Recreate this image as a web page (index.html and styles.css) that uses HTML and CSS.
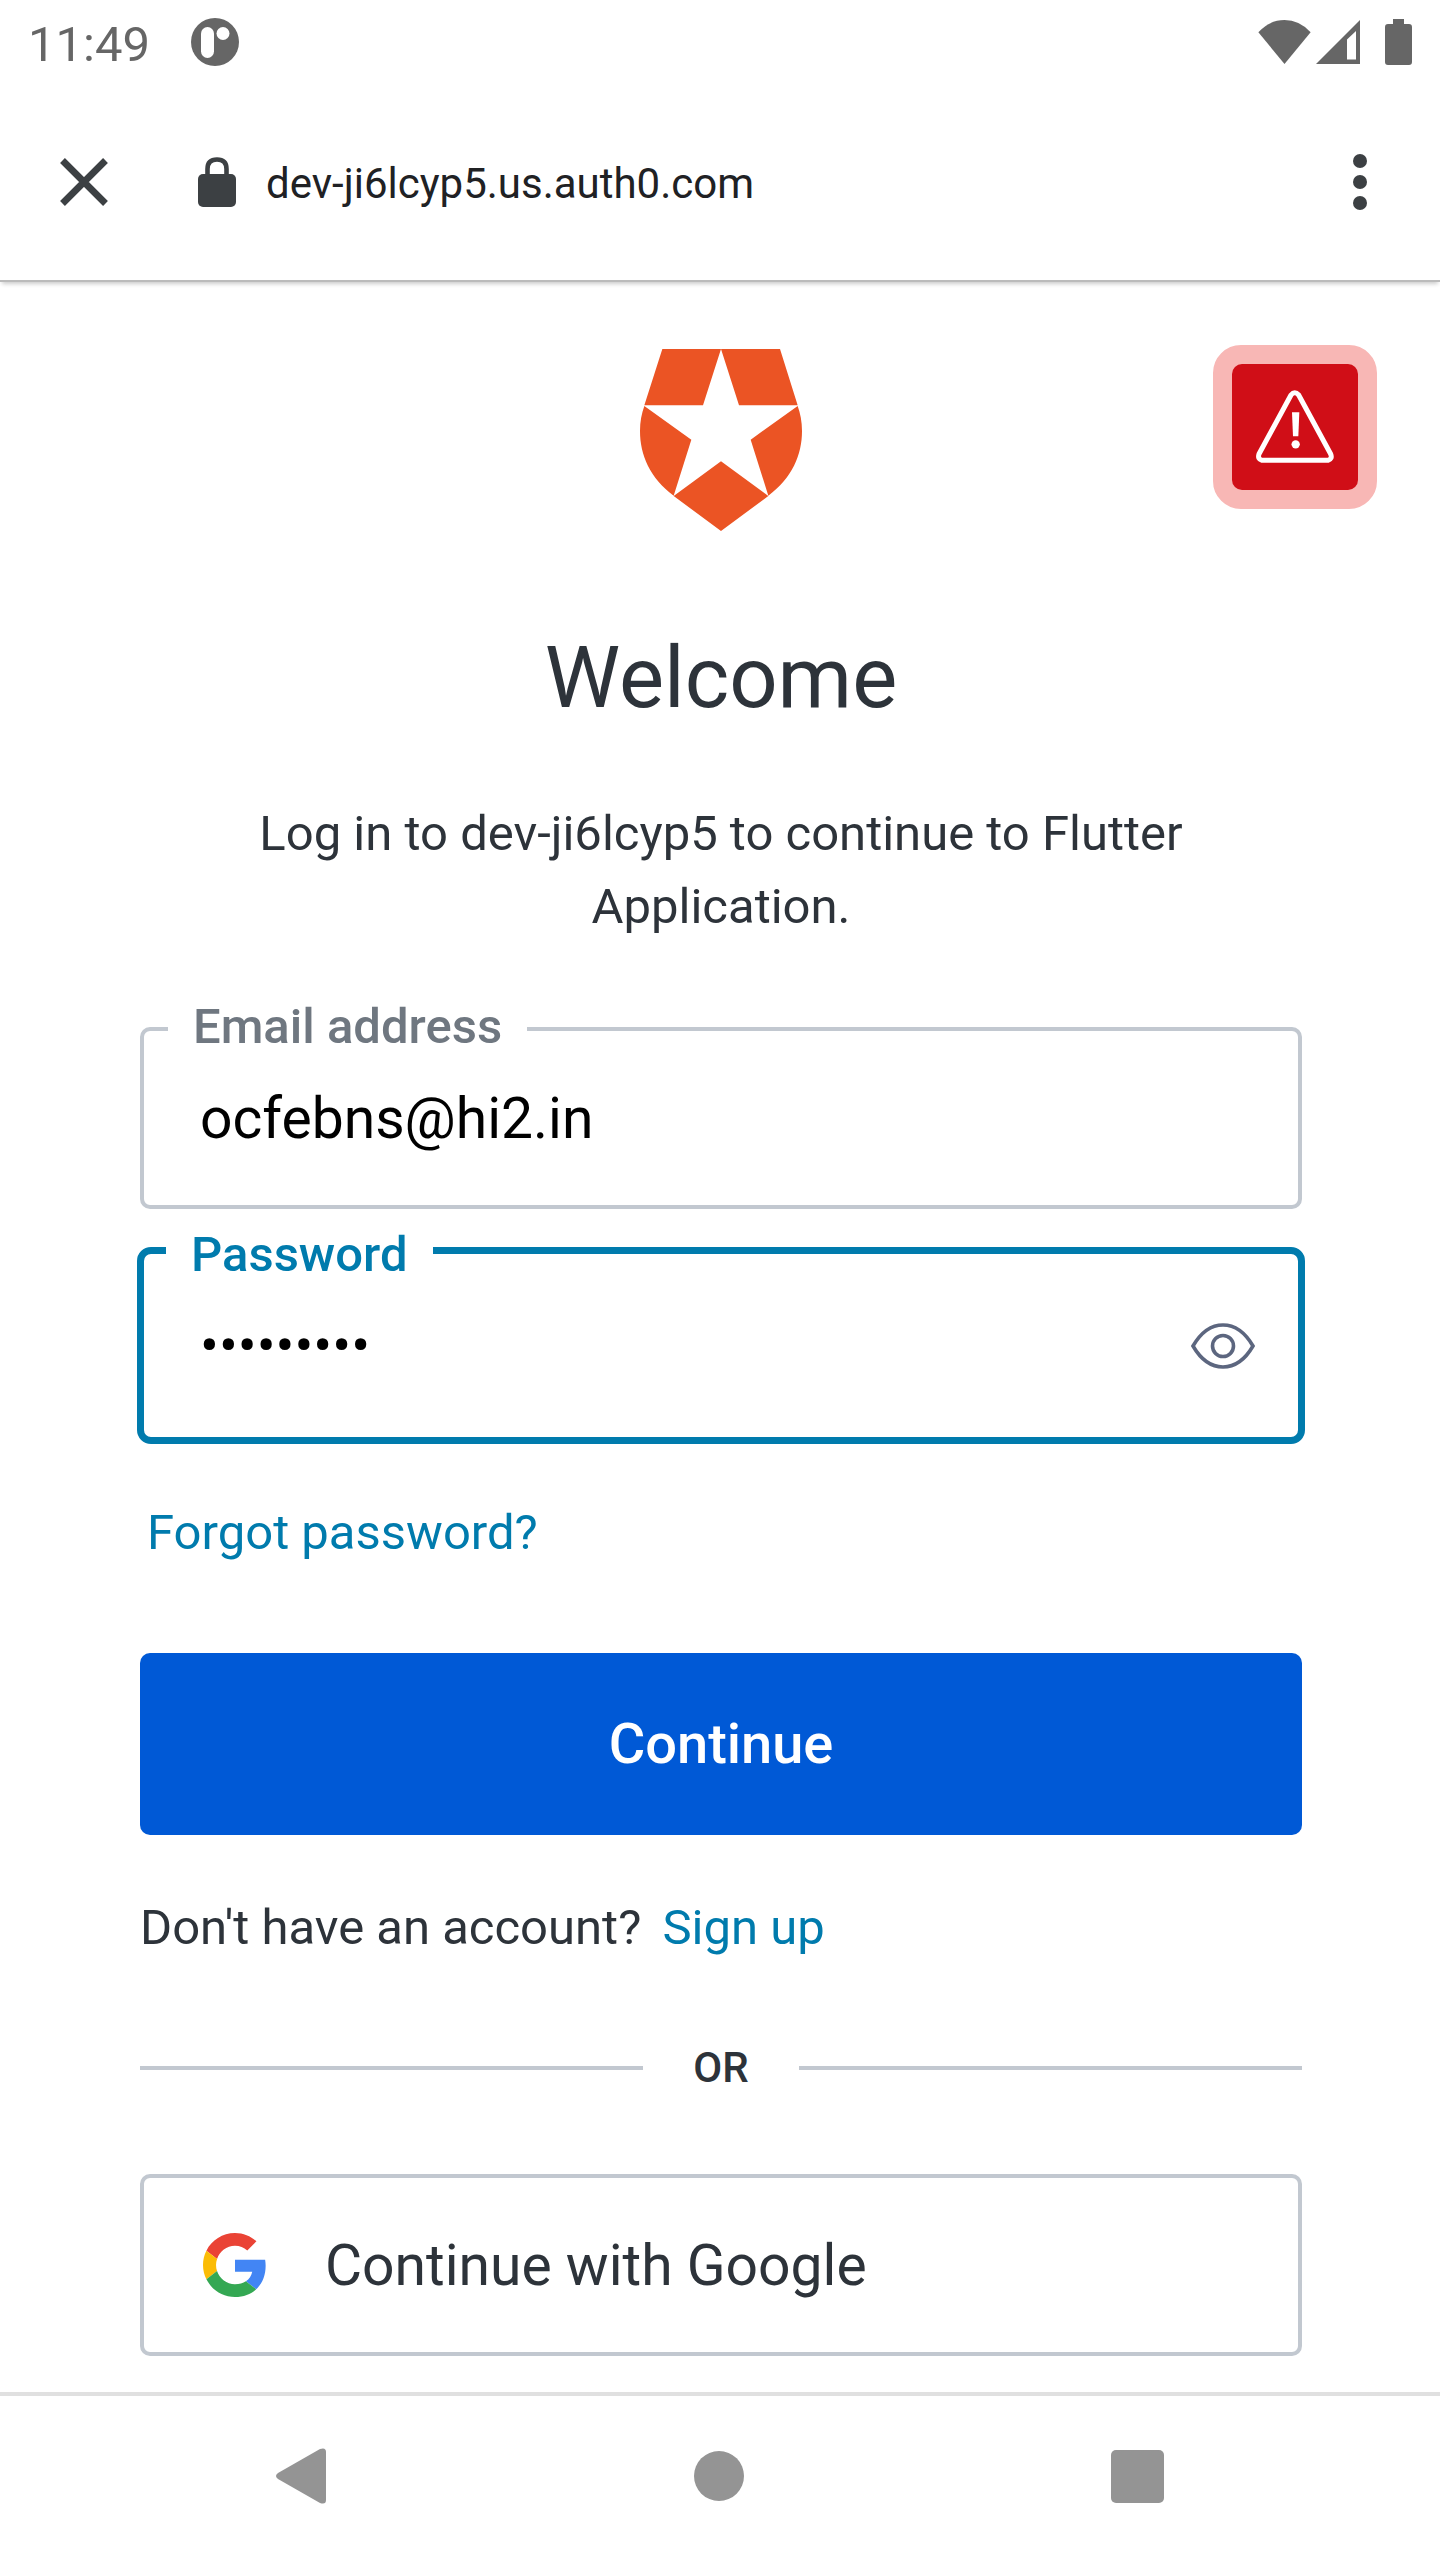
FILE: index.html
```html
<!DOCTYPE html>
<html lang="en">
<head>
<meta charset="utf-8">
<meta name="viewport" content="width=device-width, initial-scale=1">
<title>Log in</title>
<link rel="stylesheet" href="styles.css">
</head>
<body>
<div class="status-bar">
  <span class="clock">11:49</span>
  <svg width="48" height="48" viewBox="0 0 48 48" aria-hidden="true"><circle cx="24" cy="24" r="24" fill="#666"/><rect x="10" y="9" width="13" height="31" rx="6.5" fill="#fff"/><circle cx="32" cy="15.500" r="6.500" fill="#fff"/></svg>
  <div class="status-icons">
    <svg width="53" height="44" viewBox="474 57 158 133" aria-hidden="true"><path d="M474 94Q508 57 553 57T632 94L553 190Z" fill="#666"/></svg>
    <svg class="signal" width="44" height="44" viewBox="0 0 44 44" aria-hidden="true"><path fill="#666" fill-rule="evenodd" d="M0 44L44 0V44ZM31 19.500V39.500H40V11Z"/></svg>
    <svg class="battery" width="27" height="46" viewBox="0 0 27 46" aria-hidden="true"><path fill="#666" d="M8 0H19V5H24Q27 5 27 8V43Q27 46 24 46H3Q0 46 0 43V8Q0 5 3 5H8Z"/></svg>
  </div>
</div>
<header class="toolbar">
  <button class="icon-button" type="button" aria-label="Close"><svg width="48" height="48" viewBox="0 0 48 48"><path d="M2.500 2.500L45.500 45.500M45.500 2.500L2.500 45.500" stroke="#3c4043" stroke-width="6.800"/></svg></button>
  <svg class="lock" width="38" height="50" viewBox="0 0 38 50" aria-hidden="true"><path d="M9.500 20V12Q9.500 2.500 19 2.500T28.500 12V20" fill="none" stroke="#3c4043" stroke-width="4.600"/><rect y="17" width="38" height="33" rx="5" fill="#3c4043"/></svg>
  <span class="url">dev-ji6lcyp5.us.auth0.com</span>
  <button class="icon-button menu" type="button" aria-label="More options"><svg width="14" height="56" viewBox="0 0 14 56" fill="#3c4043"><circle cx="7" cy="7" r="7"/><circle cx="7" cy="28" r="7"/><circle cx="7" cy="49" r="7"/></svg></button>
</header>
<main>
  <div class="brand">
    <svg class="logo" width="162" height="182" viewBox="120 87 486 546" role="img" aria-label="Auth0" fill="#eb5424"><path d="M187 87H363L309 256H133ZM363 87H540L593 256H417ZM133 258L274 359L221 527C150 474 120 405 120 333C120 305 125 280 133 258ZM593 258L452 359L505 527C576 474 606 405 606 333C606 305 601 280 593 258ZM363 424L505 528L363 633L221 528Z"/></svg>
    <button class="alert" type="button" aria-label="Warning"><svg width="78" height="74" viewBox="230 209 234 222"><path d="M335 224Q346 210 358 224L454 401Q460 416 446 420H248Q234 416 239 401Z" fill="none" stroke="#fff" stroke-width="15" stroke-linejoin="round"/><path d="M338 276H360L357 348H341Z" fill="#fff"/><circle cx="349" cy="372" r="12.500" fill="#fff"/></svg></button>
  </div>
  <form class="login">
    <h1>Welcome</h1>
    <p class="intro">Log in to dev-ji6lcyp5 to continue to Flutter Application.</p>
    <fieldset class="field">
      <legend><label for="email">Email address</label></legend>
      <input id="email" type="text" value="ocfebns@hi2.in">
    </fieldset>
    <fieldset class="field active">
      <legend><label for="password">Password</label></legend>
      <div class="password-row">
        <input id="password" type="password" value="flutter12">
        <button class="reveal" type="button" aria-label="Show password"><svg width="64" height="46" viewBox="0 0 64 46" fill="none" stroke="#5c667f" stroke-width="3.600"><path d="M2 23C9 11 19 2 32 2S55 11 62 23C55 35 45 44 32 44S9 35 2 23Z"/><circle cx="32" cy="23" r="10.500"/></svg></button>
      </div>
    </fieldset>
    <a class="forgot" href="#">Forgot password?</a>
    <button class="submit" type="submit">Continue</button>
    <p class="signup">Don't have an account? <a href="#">Sign up</a></p>
    <div class="divider"><span>OR</span></div>
    <button class="google" type="button"><svg width="64" height="64" viewBox="0 0 48 48" aria-hidden="true"><path fill="#EA4335" d="M24 9.500c3.540 0 6.710 1.220 9.210 3.600l6.850-6.850C35.900 2.380 30.470 0 24 0 14.620 0 6.510 5.380 2.560 13.220l7.980 6.190C12.430 13.720 17.740 9.500 24 9.500z"/><path fill="#4285F4" d="M46.980 24.550c0-1.570-.15-3.090-.38-4.550H24v9.020h12.940c-.58 2.960-2.260 5.480-4.780 7.180l7.730 6c4.510-4.180 7.090-10.360 7.090-17.650z"/><path fill="#FBBC05" d="M10.530 28.590c-.48-1.450-.76-2.990-.76-4.590s.27-3.140.76-4.590l-7.980-6.190C.92 16.460 0 20.120 0 24s.92 7.540 2.560 10.780l7.970-6.190z"/><path fill="#34A853" d="M24 48c6.480 0 11.930-2.130 15.890-5.810l-7.730-6c-2.150 1.450-4.920 2.300-8.160 2.300-6.260 0-11.570-4.220-13.470-9.910l-7.980 6.190C6.510 42.620 14.620 48 24 48z"/></svg><span>Continue with Google</span></button>
  </form>
</main>
<nav class="system-nav" aria-label="System">
  <button class="icon-button" type="button" aria-label="Back"><svg width="50" height="56" viewBox="0 0 50 56"><path d="M2 25L44 1Q50-1 50 4V52Q50 57 44 55L2 31Q-2 28 2 25Z" fill="#949494"/></svg></button>
  <button class="icon-button" type="button" aria-label="Home"><svg width="50" height="50" viewBox="0 0 50 50"><circle cx="25" cy="25" r="25" fill="#949494"/></svg></button>
  <button class="icon-button" type="button" aria-label="Overview"><svg width="53" height="53" viewBox="0 0 53 53"><rect width="53" height="53" rx="5" fill="#949494"/></svg></button>
</nav>
</body>
</html>
```
FILE: styles.css
```css
* { box-sizing: border-box; }

body {
  margin: 0;
  min-height: 100vh;
  display: flex;
  flex-direction: column;
  background: #fff;
  color: #2d333a;
  font-family: Roboto, "Liberation Sans", sans-serif;
  font-size: 49px;
}

svg { display: block; flex: none; }

button, input {
  margin: 0;
  padding: 0;
  border: 0;
  background: none;
  color: inherit;
  font: inherit;
}

a { color: #007bad; text-decoration: none; }

.status-bar {
  display: flex;
  align-items: center;
  height: 84px;
  padding: 0 28px;
  color: #666;
}
.clock { padding-top: 4px; margin-right: 41px; }
.status-icons { display: flex; align-items: center; margin-left: auto; }
.signal { margin-left: 5px; }
.battery { margin-left: 25px; }

.toolbar {
  display: flex;
  align-items: center;
  height: 198px;
  padding: 0 60px;
  border-bottom: 2px solid #bbb;
  box-shadow: 0 4px 4px -2px rgba(0, 0, 0, 0.2);
}
.icon-button { display: flex; align-items: center; justify-content: center; }
.lock { margin: 0 30px 0 90px; }
.url { padding-top: 2px; color: #202124; font-size: 42px; }
.menu { width: 40px; margin-left: auto; }

main { flex: 1; padding-bottom: 36px; }

.brand {
  display: grid;
  grid-template-columns: 1fr auto 1fr;
  align-items: start;
  padding: 63px 63px 0 65px;
}
.logo { grid-column: 2; margin-top: 4px; }
.alert {
  justify-self: end;
  display: flex;
  align-items: center;
  justify-content: center;
  width: 164px;
  height: 164px;
  border: 19px solid #f8b7b5;
  border-radius: 28px;
  background: #f8b7b5;
}
.alert svg {
  box-sizing: content-box;
  padding: 26px 24px;
  border-radius: 10px;
  background: #d00e17;
}

.login {
  display: flex;
  flex-direction: column;
  padding: 0 138px 0 140px;
}
h1 {
  margin: 98px 0 70px;
  font-size: 85px;
  font-weight: 400;
  line-height: 98px;
  text-align: center;
}
.intro { margin: 0 0 56px; line-height: 73px; text-align: center; }

.field {
  min-width: 0;
  margin: 0;
  padding: 0;
  border: 4px solid #c2c8d0;
  border-radius: 10px;
}
.field legend {
  margin-left: 24px;
  padding: 0 25px 4px;
  color: #6f7780;
  font-weight: 500;
  line-height: 56px;
}
.field input {
  display: block;
  width: 100%;
  height: 146px;
  padding: 0 56px 28px;
  outline: 0;
  color: #000;
  font-size: 57px;
}
.field.active {
  margin: 8px -3px 61px;
  border: 7px solid #007bad;
  border-radius: 14px;
}
.field.active legend { margin-left: 22px; padding: 10px 25px 0; color: #007bad; }
.password-row { display: flex; }
.field.active input { flex: 1; min-width: 0; height: 154px; font-size: 56px; }
.reveal {
  display: flex;
  align-items: center;
  justify-content: center;
  width: 150px;
  padding-bottom: 28px;
}

.forgot { align-self: flex-start; margin-left: 7px; line-height: 56px; }

.submit {
  height: 182px;
  margin: 92px 0 65px;
  border-radius: 10px;
  background: #0059d6;
  color: #fff;
  font-size: 56px;
  font-weight: 500;
}

.signup { margin: 0 0 87px; line-height: 56px; }
.signup a { margin-left: 9px; }

.divider {
  display: flex;
  align-items: center;
  gap: 50px;
  margin-bottom: 81px;
  font-size: 42px;
  font-weight: 500;
  line-height: 50px;
}
.divider::before, .divider::after { content: ""; flex: 1; height: 4px; background: #c2c8d0; }

.google {
  display: flex;
  align-items: center;
  gap: 58px;
  height: 182px;
  padding: 0 59px;
  border: 4px solid #c2c8d0;
  border-radius: 10px;
  font-size: 57px;
}

.system-nav {
  display: grid;
  grid-template-columns: repeat(3, 1fr);
  height: 168px;
  padding: 0 94px 4px 92px;
  border-top: 4px solid #e0e0e0;
}
```
